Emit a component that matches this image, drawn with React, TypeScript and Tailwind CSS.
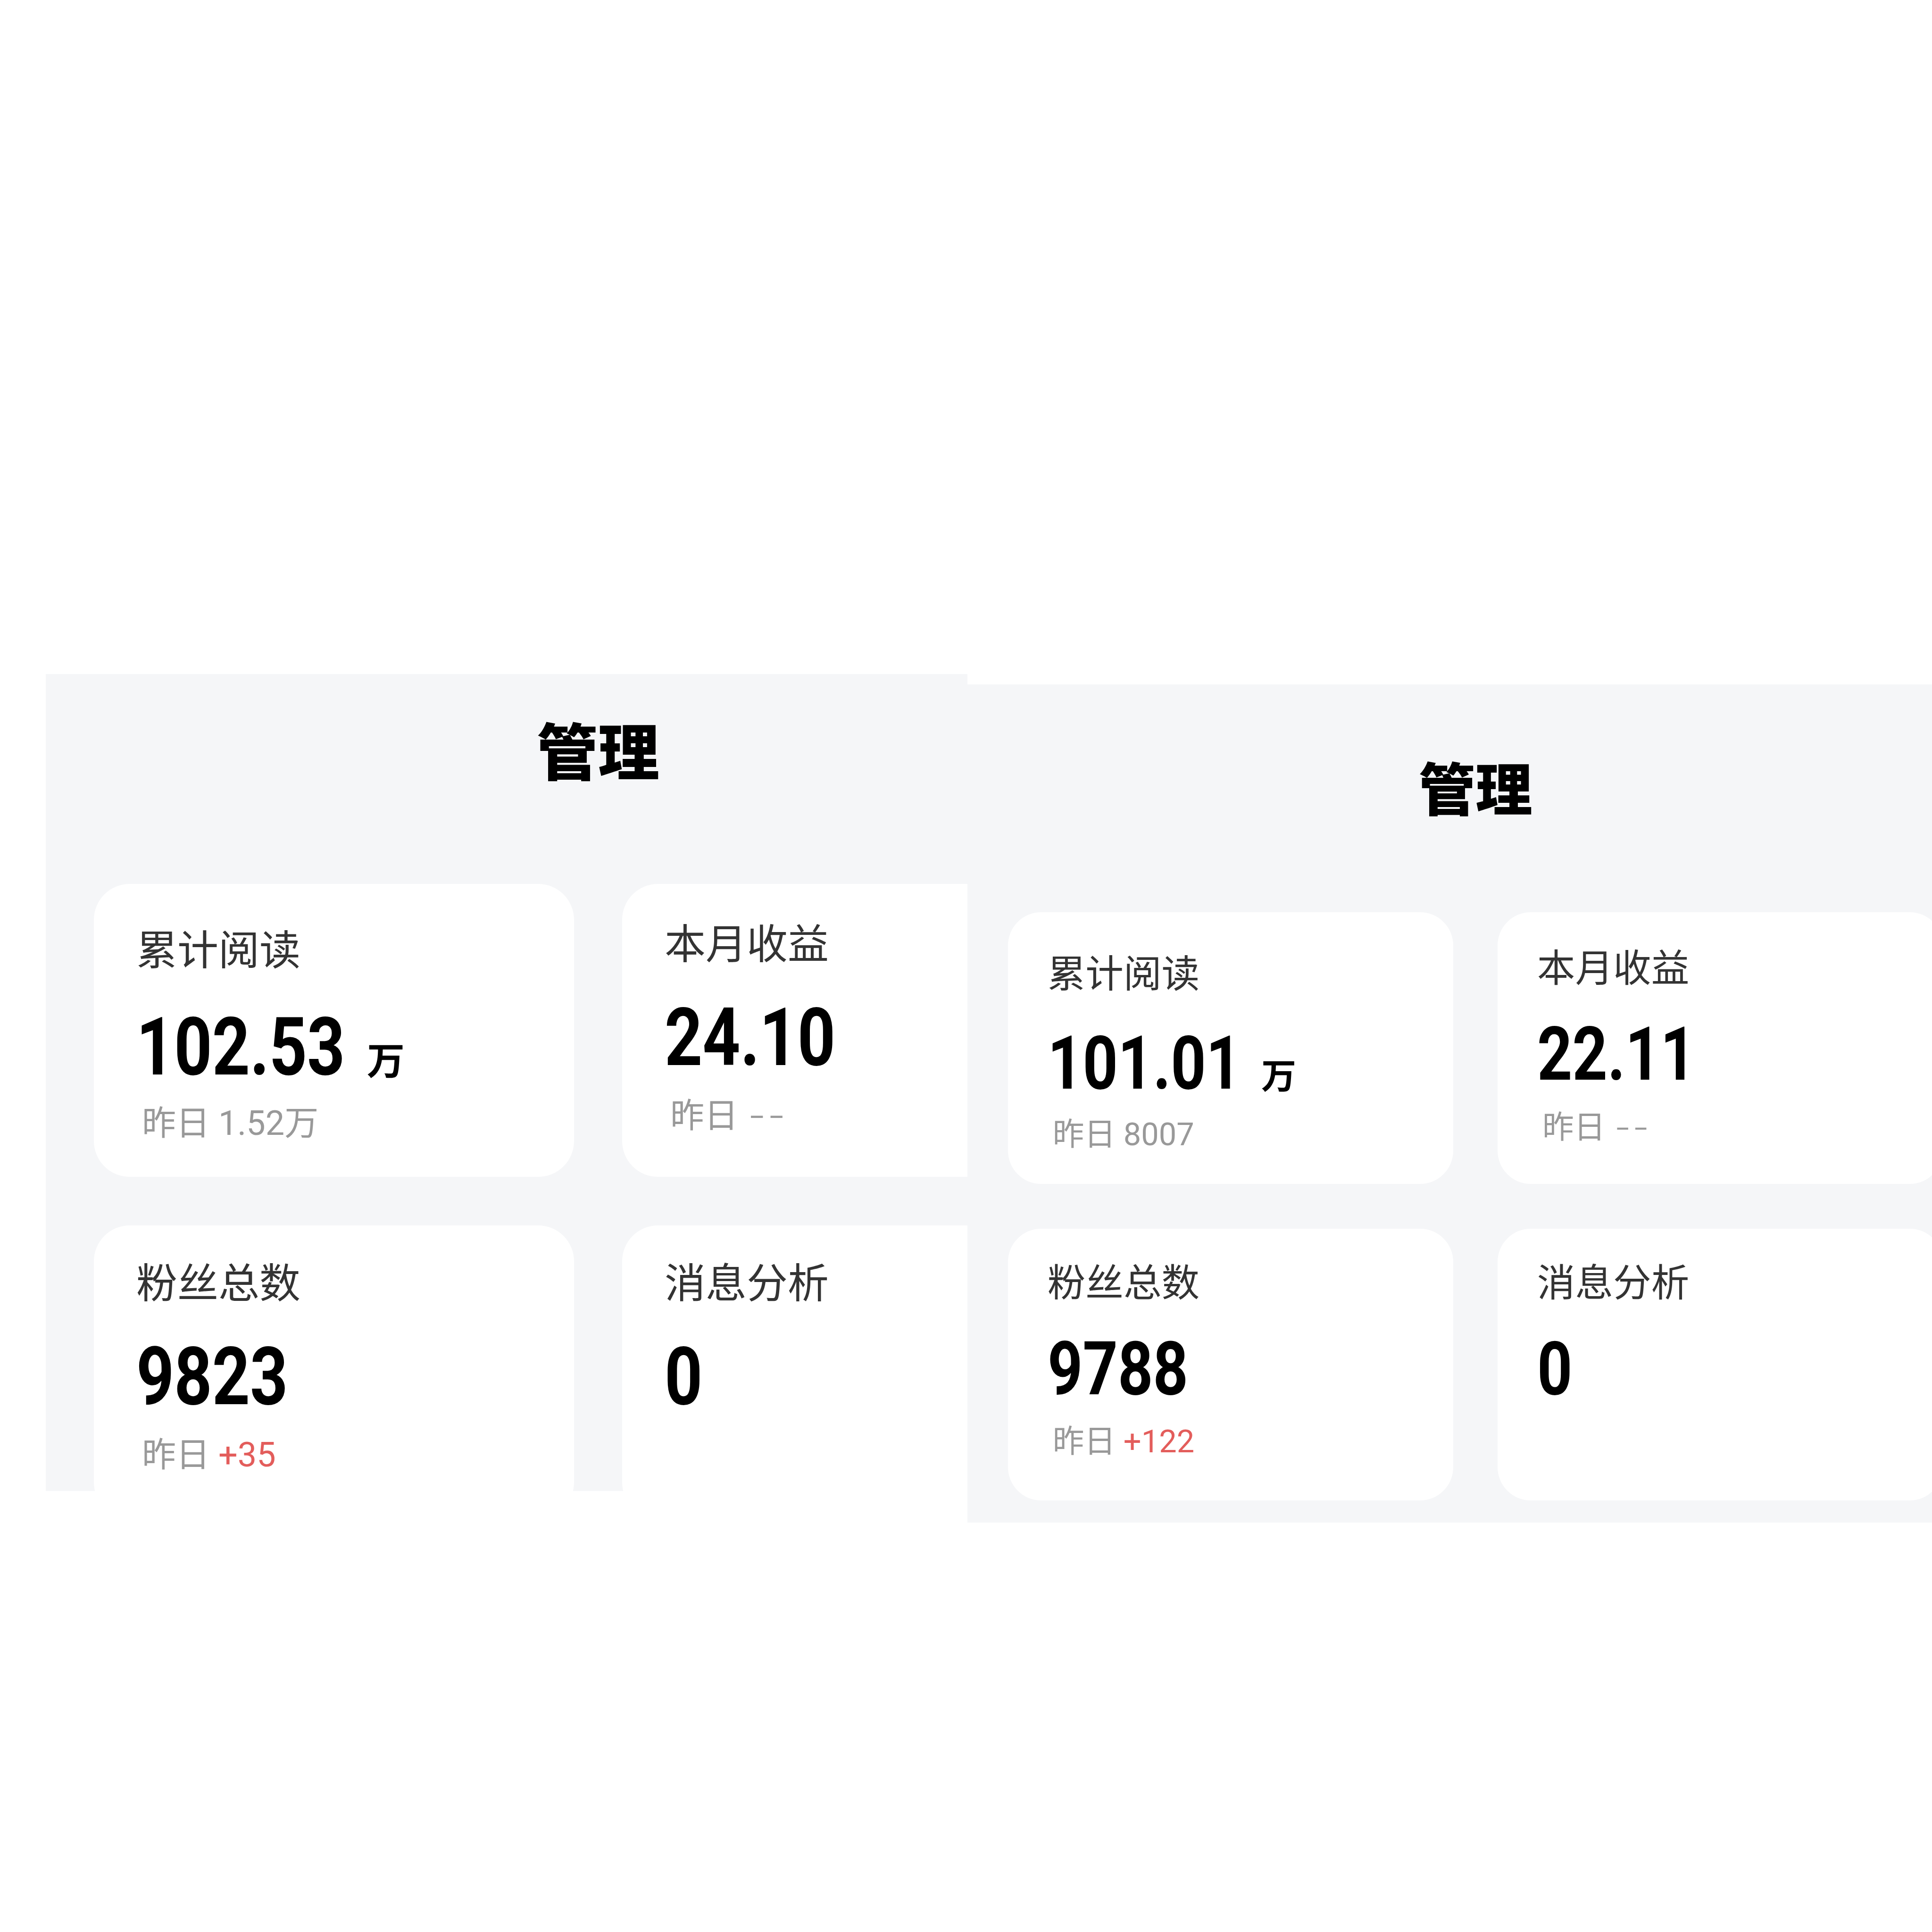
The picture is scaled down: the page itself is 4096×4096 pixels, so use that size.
import React from 'react';

type Stat = {
  label: string;
  value: string;
  unit?: string;
  sub?: string;
  accent?: boolean;
  pt: string;
  gap: string;
  subGap: string;
};

const left: Stat[] = [
  { label: '累计阅读', value: '102.53', unit: '万', sub: '1.52万', pt: 'pt-[91px]', gap: 'mt-[83px]', subGap: 'mt-[41px]' },
  { label: '本月收益', value: '24.10', sub: '--', pt: 'pt-[78px]', gap: 'mt-[76px]', subGap: 'mt-[45px]' },
  { label: '粉丝总数', value: '9823', sub: '+35', accent: true, pt: 'pt-[73px]', gap: 'mt-[76px]', subGap: 'mt-[45px]' },
  { label: '消息分析', value: '0', pt: 'pt-[73px]', gap: 'mt-[76px]', subGap: 'mt-[45px]' },
];

const right: Stat[] = [
  { label: '累计阅读', value: '101.01', unit: '万', sub: '8007', pt: 'pt-[91px]', gap: 'mt-[83px]', subGap: 'mt-[41px]' },
  { label: '本月收益', value: '22.11', sub: '--', pt: 'pt-[78px]', gap: 'mt-[76px]', subGap: 'mt-[45px]' },
  { label: '粉丝总数', value: '9788', sub: '+122', accent: true, pt: 'pt-[73px]', gap: 'mt-[76px]', subGap: 'mt-[45px]' },
  { label: '消息分析', value: '0', pt: 'pt-[73px]', gap: 'mt-[76px]', subGap: 'mt-[45px]' },
];

function SubValue({ text, accent }: { text: string; accent?: boolean }) {
  if (text === '--') {
    return <span className="ml-[4px] text-[62px] tracking-[0.1em]">−−</span>;
  }
  return <span className={accent ? 'text-[#e35d5b]' : ''}>{text}</span>;
}

function StatCard({ s }: { s: Stat }) {
  return (
    <div className={`h-[621px] rounded-[76px] bg-white pl-[90px] ${s.pt}`}>
      <div className="font-['Noto_Sans_CJK_SC',sans-serif] text-[87px] leading-none text-[#333333]">{s.label}</div>
      <div className={`flex items-baseline ${s.gap}`}>
        {/* narrow digits: Roboto squeezed to the condensed width of the original */}
        <span className="inline-block origin-left scale-x-[0.824] font-['Roboto',sans-serif] text-[170px] font-bold leading-none text-black">
          {s.value}
        </span>
        {s.unit && (
          <span className="-ml-[48px] font-['Noto_Sans_CJK_SC',sans-serif] text-[80px] font-bold leading-none text-black">
            {s.unit}
          </span>
        )}
      </div>
      {s.sub && (
        <div className={`${s.subGap} ml-[12px] font-['Roboto','Noto_Sans_CJK_SC',sans-serif] text-[72px] leading-none text-[#999999]`}>
          昨日 <SubValue text={s.sub} accent={s.accent} />
        </div>
      )}
    </div>
  );
}

function Panel({ stats, pad }: { stats: Stat[]; pad: string }) {
  return (
    <div className={`w-[2346px] bg-[#f5f6f8] ${pad}`}>
      <div className="w-[2138px]">
        <h1 className="text-center font-['Noto_Sans_CJK_SC',sans-serif] text-[130px] font-black leading-none text-black">管理</h1>
        <div className="mt-[223px] grid grid-cols-2 gap-x-[102px] gap-y-[103px]">
          {stats.map((s) => (
            <StatCard key={s.label} s={s} />
          ))}
        </div>
      </div>
    </div>
  );
}

export default function App() {
  return (
    <div className="flex h-[4096px] w-[4096px] items-start bg-white pl-[97px] pt-[1429px]">
      <div className="h-[1732px] w-[1954px] shrink-0 overflow-hidden bg-[#f5f6f8]">
        <Panel stats={left} pad="pt-[92px] pl-[102px] pb-[60px]" />
      </div>
      <div className="mt-[22px] h-[1777px] w-[2045px] shrink-0 overflow-hidden bg-[#f5f6f8]">
        <div className="[zoom:0.927]">
          <Panel stats={right} pad="pt-[168px] pl-[93px] pb-[60px]" />
        </div>
      </div>
    </div>
  );
}
